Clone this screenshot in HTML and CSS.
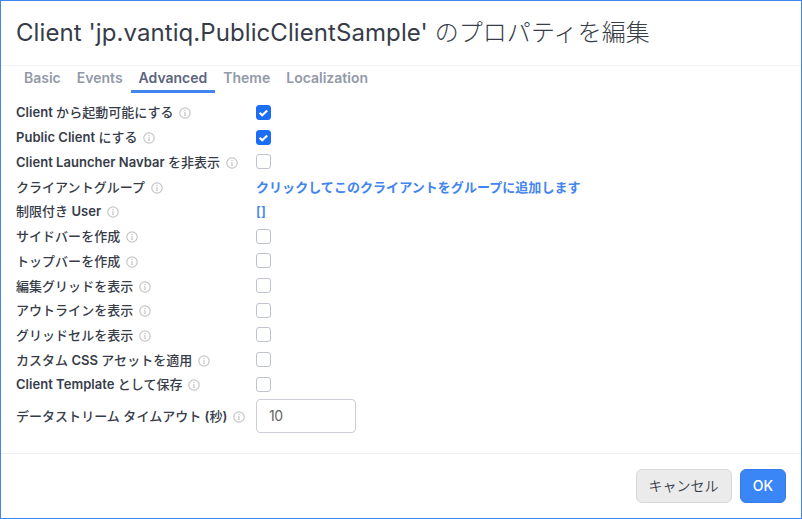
FILE: index.html
```
<!DOCTYPE html>
<html lang="ja">
<head>
<meta charset="utf-8">
<title>Client のプロパティを編集</title>
<link rel="stylesheet" href="styles.css">
</head>
<body>
<svg width="0" height="0" class="defs"><defs>
<symbol id="info" viewBox="0 0 12 12"><circle cx="6" cy="6" r="5.2" fill="none" stroke="currentColor" stroke-width="1.2"/><path d="M6 5.2v3.6" fill="none" stroke="currentColor" stroke-width="1.2"/><path d="M5 5.4h1M4.8 8.5h2.4" fill="none" stroke="currentColor" stroke-width=".6"/><circle cx="6" cy="3.5" r=".75" fill="currentColor"/></symbol>
<symbol id="check" viewBox="0 0 15 15"><path d="M3.6 7.8l2.6 2.4 5-4.7" fill="none" stroke="#fff" stroke-width="2.1"/></symbol>
</defs></svg>
<main class="dialog">
<header class="header"><h1>Client 'jp.vantiq.PublicClientSample' <span class="light">のプロパティを編集</span></h1></header>
<nav class="tabs"><a>Basic</a><a>Events</a><a class="active">Advanced</a><a>Theme</a><a>Localization</a></nav>
<section class="form">
<div class="row"><label>Client <span class="jp">から起動可能にする</span></label><svg class="info"><use href="#info"/></svg><span class="box on"><svg><use href="#check"/></svg></span></div>
<div class="row"><label>Public Client <span class="jp">にする</span></label><svg class="info"><use href="#info"/></svg><span class="box on"><svg><use href="#check"/></svg></span></div>
<div class="row"><label>Client Launcher Navbar <span class="jp">を非表示</span></label><svg class="info"><use href="#info"/></svg><span class="box"></span></div>
<div class="row"><label><span class="jp">クライアントグループ</span></label><svg class="info"><use href="#info"/></svg><a class="link">クリックしてこのクライアントをグループに追加します</a></div>
<div class="row"><label><span class="jp">制限付き</span> User</label><svg class="info"><use href="#info"/></svg><a class="link">[]</a></div>
<div class="row"><label><span class="jp">サイドバーを作成</span></label><svg class="info"><use href="#info"/></svg><span class="box"></span></div>
<div class="row"><label><span class="jp">トップバーを作成</span></label><svg class="info"><use href="#info"/></svg><span class="box"></span></div>
<div class="row"><label><span class="jp">編集グリッドを表示</span></label><svg class="info"><use href="#info"/></svg><span class="box"></span></div>
<div class="row"><label><span class="jp">アウトラインを表示</span></label><svg class="info"><use href="#info"/></svg><span class="box"></span></div>
<div class="row"><label><span class="jp">グリッドセルを表示</span></label><svg class="info"><use href="#info"/></svg><span class="box"></span></div>
<div class="row"><label><span class="jp">カスタム</span> CSS <span class="jp">アセットを適用</span></label><svg class="info"><use href="#info"/></svg><span class="box"></span></div>
<div class="row"><label>Client Template <span class="jp">として保存</span></label><svg class="info"><use href="#info"/></svg><span class="box"></span></div>
<div class="row tall"><label><span class="jp">データストリーム タイムアウト</span> (<span class="jp">秒</span>)</label><svg class="info"><use href="#info"/></svg><input class="field" value="10"></div>
</section>
<footer class="footer"><button class="cancel">キャンセル</button><button class="ok">OK</button></footer>
</main>
</body>
</html>
```
FILE: styles.css
```
* { box-sizing: border-box; }
body { margin: 0; font-family: Inter, "Noto Sans CJK JP", sans-serif; color: #373c49; background: #fff; }
.defs { display: block; height: 0; }
.dialog { width: 802px; height: 519px; border: 1px solid #4285f0; display: flex; flex-direction: column; overflow: hidden; }
.header { height: 65px; border-bottom: 1px solid #f0f1f3; padding-left: 15px; display: flex; align-items: center; }
h1 { margin: 0; font-size: 24px; line-height: 30px; font-weight: 400; white-space: nowrap; letter-spacing: .08px; }
.light { font-weight: 300; }
.tabs { display: flex; height: 27px; margin-left: 15px; font-size: 14px; font-weight: 600; color: #9299a8; }
.tabs a { padding: 0 8px; line-height: 24px; height: 27px; }
.tabs .active { color: #5c6580; border-bottom: 3px solid #4285f0; }
.form { padding: 7px 15px 0; flex: 1; }
.row { height: 24.74px; display: grid; grid-template-columns: auto 1fr 530px; align-items: center; font-size: 13px; font-weight: 600; white-space: nowrap; }
.row label { line-height: 20px; letter-spacing: .03px; }
.jp { font-weight: 500; }
.info { width: 12px; height: 12px; margin: 2px 0 0 5.5px; color: #c6c6c6; }
.box { width: 15px; height: 15px; border: 1px solid #bfc4cc; border-radius: 3px; background: #fff; }
.box svg { display: block; width: 15px; height: 15px; margin: -1px; }
.box.on { background: #1b6ef3; border-color: #1b6ef3; }
.link { color: #4285f0; line-height: 20px; letter-spacing: .05px; }
.tall { height: 38px; }
.field { width: 100px; height: 34px; border: 1px solid #cdced9; border-radius: 4px; padding: 0 12px; font: 400 14px Inter, sans-serif; letter-spacing: -.4px; color: #666; outline: 0; }
.footer { height: 65px; border-top: 1px solid #f0f1f3; padding: 0 15px; display: flex; align-items: center; justify-content: flex-end; gap: 8px; }
button { height: 34px; padding: 0 0 1px; border-radius: 6px; font: 500 14px Inter, "Noto Sans CJK JP", sans-serif; }
.cancel { width: 96px; color: #373c49; background: #ebebeb; border: 1px solid #d7d8d9; font-weight: 350; padding: 0 1px 2px 0; }
.ok { width: 46px; color: #fff; background: #3b86f7; border: 1px solid #347ae8; }
```
